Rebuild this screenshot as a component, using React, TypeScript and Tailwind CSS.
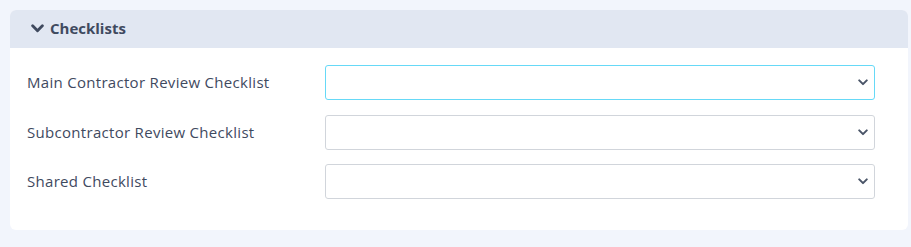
import React from "react";

function Chevron({ className, sw = 2.6 }: { className?: string; sw?: number }) {
  return (
    <svg viewBox="0 0 12 8" className={className} fill="none" stroke="currentColor" strokeWidth={sw} strokeLinecap="round" strokeLinejoin="round">
      <path d="M1.5 1.5 L6 6 L10.5 1.5" />
    </svg>
  );
}

function Row({ label, focused }: { label: string; focused?: boolean }) {
  return (
    <div className="flex items-center h-[35px]">
      <div className="w-[298px] text-[15px] font-medium tracking-[0.3px] text-[#3f4a5f]">{label}</div>
      <div
        className={`relative flex-1 h-[35px] rounded-[3px] border bg-white ${
          focused ? "border-[#66d9f7]" : "border-[#d1d5db]"
        }`}
      >
        <Chevron className="absolute right-[6px] top-[13px] w-[10px] h-[7px] text-[#4a5568]" sw={2.4} />
      </div>
    </div>
  );
}

export default function App() {
  return (
    <div
      className="w-[911px] h-[247px] bg-[#f2f5fc] pt-[10px] pl-[10px] pr-[3px]"
      style={{ fontFamily: "'Open Sans', sans-serif" }}
    >
      <div className="bg-white rounded-[6px] overflow-hidden h-[220px]">
        <div className="h-[38px] bg-[#e1e7f2] flex items-center pl-[21px] pb-[2px] gap-[6px] text-[#3f4a5f]">
          <Chevron className="w-[13px] h-[9px]" sw={2.6} />
          <span className="text-[15px] font-bold">Checklists</span>
        </div>
        <div className="pl-[17px] pr-[33px] pt-[17px] flex flex-col gap-[14.5px]">
          <Row label="Main Contractor Review Checklist" focused />
          <Row label="Subcontractor Review Checklist" />
          <Row label="Shared Checklist" />
        </div>
      </div>
    </div>
  );
}
